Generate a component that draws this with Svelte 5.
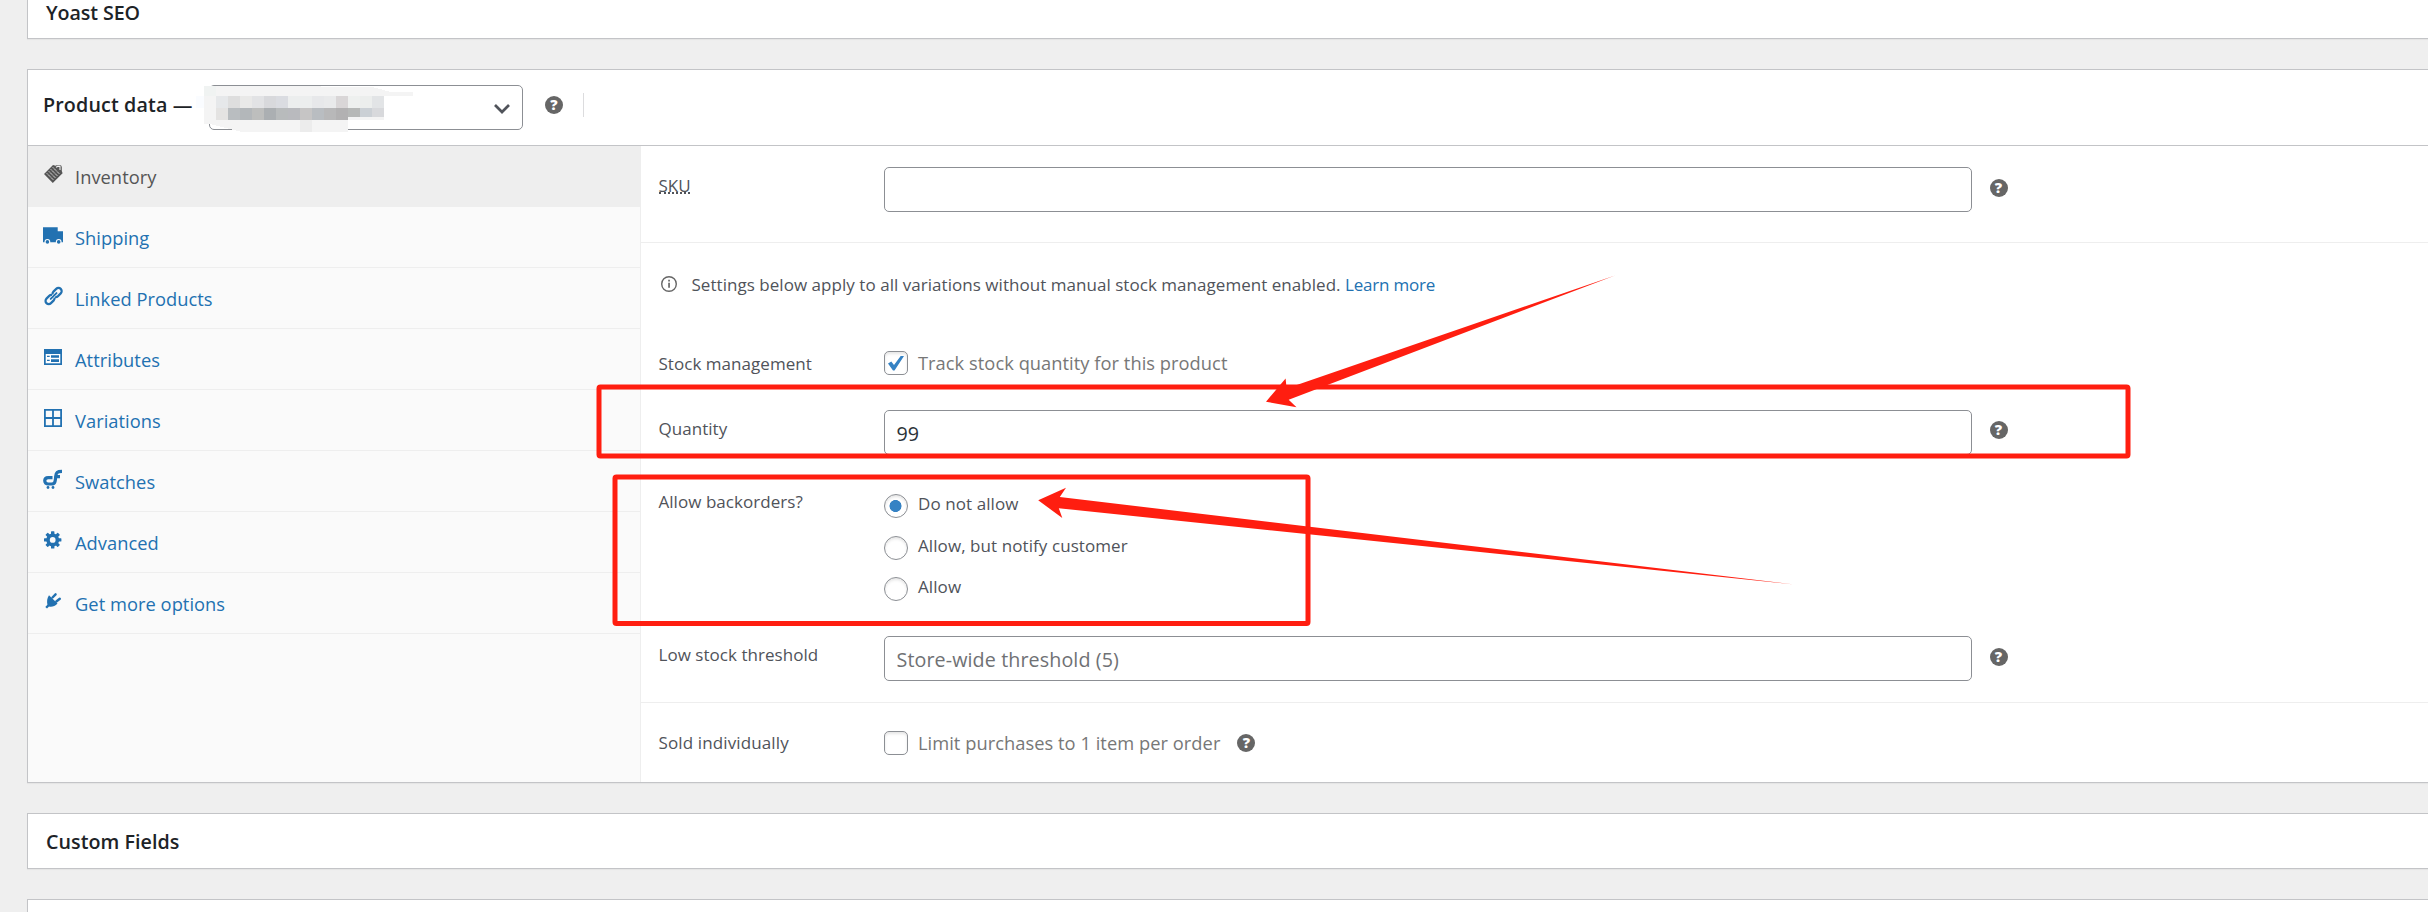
<script>
  const tabs = [
    { id: 'inventory', label: 'Inventory' },
    { id: 'shipping', label: 'Shipping' },
    { id: 'linked', label: 'Linked Products' },
    { id: 'attributes', label: 'Attributes' },
    { id: 'variations', label: 'Variations' },
    { id: 'swatches', label: 'Swatches' },
    { id: 'advanced', label: 'Advanced' },
    { id: 'more', label: 'Get more options' }
  ];
  const backorders = ['Do not allow', 'Allow, but notify customer', 'Allow'];
  const topCells = ['#e6e8ea', '#dedede', '#e9e9e8', '#e2e3e5', '#d8d9dc', '#dadce1', '#eceeee', '#eceeee', '#e7e8ea', '#e9eaeb', '#d9d6d7', '#eef0ef', '#eceeed', '#e2e4e6'];
  const lowCells = ['#e4e3e2', '#b9bdc0', '#b3b7ba', '#bdbebd', '#abafb2', '#b8bbbc', '#b9babe', '#c6c5c5', '#b9bdc1', '#b8b8b9', '#b2b1b2', '#b6b8b7', '#cbd0d5', '#d8d9dc'];
  const teeth = [0, 45, 90, 135, 180, 225, 270, 315];
</script>

{#snippet help()}
  <span class="help">?</span>
{/snippet}

<div class="page">
  <section class="panel first"><h2>Yoast SEO</h2></section>

  <section class="panel product">
    <header>
      <h2>Product data —</h2>
      <div class="select">
        <svg class="mosaic" width="230" height="56" viewBox="190 80 230 56" shape-rendering="crispEdges">
          <path fill="#f4f4f4" d="M204 86H294L374 87.500L391 92H413V96H384V120H348V132H242L218 126L210 124H204Z" />
          <path fill="#f0f3f2" d="M204 86h12v10h-12z" />
          <path fill="#fafcff" d="M196 96h8v12h-8z" />
          {#each topCells as c, i}<rect x={216 + i * 12} y="96" width="12" height="12" fill={c} />{/each}
          {#each lowCells as c, i}<rect x={216 + i * 12} y="108" width="12" height={i > 10 ? (i === 11 ? 9 : 12) - (i > 11 ? 3 : 0) : 12} fill={c} />{/each}
          <rect x="300" y="120" width="12" height="12" fill="#ececec" />
        </svg>
        <svg class="chevron" width="18" height="12" viewBox="0 0 18 12"><path d="M2 2L9 9L16 2" fill="none" stroke="#50535a" stroke-width="2.700" /></svg>
      </div>
      {@render help()}
      <i class="bar"></i>
    </header>

    <div class="body">
      <nav>
        {#each tabs as t, i}
          <a class:active={i === 0}>
            <svg width="20" height="20" viewBox="0 0 20 20" fill="currentColor">
              {#if t.id === 'inventory'}
                <path d="M1 10L10 1L12.500 1.800L13.500 1.200H18L18.800 3V7L19.600 9.300L9.800 18.900Z" />
                <path d="M13 3.200L14.600 2.400H17V6" fill="none" stroke="#eee" stroke-width="1.100" />
                <path d="M3.800 9.300L10.500 16M5.800 7.300L12.500 14M7.800 5.300L14.500 12M9.800 3.300L16.500 10" stroke="#e4e4e4" stroke-width="1" stroke-dasharray="1.600 .5" />
              {:else if t.id === 'shipping'}
                <path d="M0 2.300H14.700V6.300H20V17.300H0Z" />
                <circle cx="4.400" cy="16.900" r="2.900" fill="#fafafa" /><circle cx="15.700" cy="16.900" r="2.900" fill="#fafafa" />
                <circle cx="4.400" cy="16.900" r="1.800" /><circle cx="15.700" cy="16.900" r="1.800" />
              {:else if t.id === 'linked'}
                <g transform="rotate(-45 10.600 10)" fill="none" stroke="currentColor" stroke-width="2.200">
                  <path d="M10.200 11.800A3.300 3.300 0 0 1 7.600 13.200H3.700A3.200 3.200 0 0 1 3.700 6.800H7.600A3.300 3.300 0 0 1 10.200 8.200" />
                  <path d="M11 8.200A3.300 3.300 0 0 1 13.600 6.800H17.500A3.200 3.200 0 0 1 17.500 13.200H13.600A3.300 3.300 0 0 1 11 11.800" />
                  <path d="M6.500 10H14.700" stroke-width="1.900" stroke-linecap="round" />
                </g>
              {:else if t.id === 'attributes'}
                <path d="M1 2H19V18H1Z" /><path fill="#fff" d="M2.700 7H17.300V16.300H2.700Z" />
                <path d="M8 8.200h8v2.600H8zM8 12.300h8v2.700H8zM4 8.800h2.700v1.200H4zM4 12.800h2.700v1.200H4z" />
              {:else if t.id === 'variations'}
                <path d="M1.900 1.900H18.100V18.100H1.900ZM10 2V18M2 10H18" fill="none" stroke="currentColor" stroke-width="1.800" />
              {:else if t.id === 'swatches'}
                <path d="M9.500 8.700H5.200C.6 8.700.6 15 5.200 15H8.500C12.500 15 12.300 11.500 12.700 7.500C13.100 3.500 14 2.400 19 2.400M12.500 7.700H17" fill="none" stroke="currentColor" stroke-width="3.200" />
                <circle cx="5" cy="18.500" r="1.400" /><circle cx="10" cy="18.500" r="1.400" />
              {:else if t.id === 'advanced'}
                <circle cx="9.700" cy="9.900" r="4.700" fill="none" stroke="currentColor" stroke-width="3.600" />
                {#each teeth as a}<rect x="8" y="1.200" width="3.400" height="4" rx=".6" transform="rotate({a} 9.700 9.900)" />{/each}
              {:else}
                <path d="M6 4.200L14.500 12.500C12 15.600 8.500 16 6 15.500L4 17.600L2.300 16L4.400 13.800C3.800 10.500 4 7 6 4.200Z" />
                <path d="M9.500 6.500L12.600 3.300M13.300 10.500L16.800 7.700" stroke="currentColor" stroke-width="2.400" stroke-linecap="round" />
              {/if}
            </svg>
            <span>{t.label}</span>
          </a>
        {/each}
      </nav>

      <div class="form">
        <div class="row sku line">
          <label><abbr>SKU</abbr></label>
          <div class="field"></div>
          {@render help()}
        </div>
        <div class="notice">
          <svg width="18" height="18" viewBox="0 0 18 18"><circle cx="9" cy="9" r="7.300" fill="none" stroke="#666" stroke-width="1.400" /><path d="M8.200 4.800h1.700v1.600H8.200zM8.200 7.800h1.700v5H8.200z" fill="#666" /></svg>
          <p>Settings below apply to all variations without manual stock management enabled. <a>Learn more</a></p>
        </div>
        <div class="row stock">
          <label>Stock management</label>
          <div class="check">
            <span class="box"><svg width="22" height="22" viewBox="0 0 22 22"><path d="M3 11.500L6.300 9.600L9 13L15.700 4H19L9.500 18.500H8Z" fill="#3582c4" /></svg></span>
            <span class="desc">Track stock quantity for this product</span>
          </div>
        </div>
        <div class="row qty">
          <label>Quantity</label>
          <div class="field">99</div>
          {@render help()}
        </div>
        <div class="row back">
          <label>Allow backorders?</label>
          <div class="radios">
            {#each backorders as b, i}
              <div class="radio"><span class="dot" class:on={i === 0}></span>{b}</div>
            {/each}
          </div>
        </div>
        <div class="row low line">
          <label>Low stock threshold</label>
          <div class="field hint">Store-wide threshold (5)</div>
          {@render help()}
        </div>
        <div class="row sold">
          <label>Sold individually</label>
          <div class="check">
            <span class="box"></span>
            <span class="desc">Limit purchases to 1 item per order</span>
            {@render help()}
          </div>
        </div>
      </div>
    </div>
  </section>

  <section class="panel custom"><h2>Custom Fields</h2></section>
  <section class="panel last"></section>

  <svg class="marks" width="2428" height="912" viewBox="0 0 2428 912">
    <g fill="none" stroke="#ff1e10" stroke-width="5">
      <rect x="599" y="387" width="1529" height="69" rx="1.500" />
      <rect x="615" y="477" width="693" height="146.500" rx="1.500" />
    </g>
    <g fill="#ff1e10">
      <path d="M1266 401.700L1285.600 378.500L1286.600 388.500L1615 275.400L1288.700 399.700L1296.500 407.200Z" />
      <path d="M1038.200 500.300L1066 487.700L1059.800 497L1794 584.500L1058.800 508.300L1062.300 518Z" />
    </g>
  </svg>
</div>

<style>
  :global(body) { margin: 0; background: #efefef; }
  .page { position: relative; width: 2428px; height: 912px; overflow: hidden; background: #efefef; font-family: "Open Sans", "Noto Sans", sans-serif; font-size: 17px; line-height: 24px; letter-spacing: .04px; color: #50535a; display: flex; flex-direction: column; gap: 30px; white-space: nowrap; }
  .panel { margin-left: 27px; box-sizing: border-box; flex: none; background: #fff; border: solid #c3c4c7; border-width: 1px 0 1px 1px; box-shadow: 0 1px 1px rgba(0, 0, 0, .04); }
  h2 { margin: 0; font-size: 19.700px; font-weight: 600; line-height: 24px; color: #1d2327; }
  .first { height: 39px; border-top: 0; padding: 1px 0 0 18px; }
  .first h2 { letter-spacing: -.1px; }
  .product { height: 714px; }
  .custom { height: 56px; padding: 16px 0 0 18px; }
  .last { height: 60px; }
  header { box-sizing: border-box; height: 76px; border-bottom: 1px solid #c3c4c7; display: flex; align-items: flex-start; }
  header h2 { width: 181px; padding-left: 15px; margin-top: 23px; box-sizing: border-box; letter-spacing: .13px; }
  .select { position: relative; width: 314px; height: 45px; box-sizing: border-box; margin-top: 15px; border: 1px solid #8c8f94; border-radius: 5px; display: flex; justify-content: flex-end; padding: 17px 11px 0 0; }
  .mosaic { position: absolute; left: -20px; top: -6px; }
  .help { flex: none; width: 18px; height: 18px; border-radius: 50%; background: #666; color: #fff; font-size: 14.500px; font-weight: 800; line-height: 18px; text-align: center; }
  header .help { margin: 26px 0 0 22px; }
  .bar { width: 1px; height: 24px; margin: 23px 0 0 20px; background: #dcdcde; }
  .body { display: flex; height: 636px; }
  nav { width: 612px; background: #fafafa; border-right: 1px solid #eee; flex: none; }
  nav a { display: flex; gap: 12px; height: 60px; border-bottom: 1px solid #eee; padding-left: 15px; font-size: 18.300px; color: #2271b1; }
  nav a svg { margin-top: 18px; }
  nav a span { margin-top: 19px; }
  nav a.active { background: #eee; color: #555; }
  .form { flex: 1; }
  .row { box-sizing: border-box; display: grid; grid-template-columns: 226px 1088px auto; justify-content: start; align-items: start; padding-left: 17px; }
  .row > label { padding-left: .5px; }
  .line { border-bottom: 1px solid #eee; }
  .row > .help { margin-left: 17.500px; }
  .field { box-sizing: border-box; height: 45px; border: 1px solid #8c8f94; border-radius: 5px; padding: 0 11.500px; font-size: 19.700px; line-height: 46px; color: #2c3338; }
  .hint { color: #6f7174; letter-spacing: .1px; }
  .sku { height: 97px; }
  .sku label { margin-top: 28px; }
  abbr { display: block; width: 31px; height: 18px; line-height: 24px; border-bottom: 2px dotted #50535a; }
  .sku .field { margin-top: 21px; }
  .sku .help { margin-top: 33px; }
  .notice { height: 92px; display: flex; gap: 14px; padding-left: 18.500px; }
  .notice svg { margin-top: 32px; }
  .notice p { margin: 30px 0 0; }
  .notice a { color: #2271b1; letter-spacing: -.2px; }
  .stock { height: 59px; padding-top: 16px; }
  .stock label { margin-top: 1px; }
  .check { display: flex; }
  .box { box-sizing: border-box; width: 24px; height: 24px; border: 1px solid #8c8f94; border-radius: 5px; box-shadow: inset 0 2px 3px rgba(0, 0, 0, .1); }
  .box svg { display: block; }
  .desc { margin-left: 10px; font-size: 18.300px; color: #777; }
  .qty { height: 76px; }
  .qty label { margin-top: 23px; }
  .qty .field { margin-top: 16px; }
  .qty .help { margin-top: 27px; }
  .back { height: 150px; }
  .back label { margin-top: 20px; }
  .radios { padding-top: 24px; display: grid; grid-auto-rows: 41.500px; align-items: start; }
  .radio { display: flex; gap: 10px; line-height: 20.500px; letter-spacing: .08px; }
  .dot { box-sizing: border-box; width: 24px; height: 24px; border: 1px solid #8c8f94; border-radius: 50%; box-shadow: inset 0 2px 3px rgba(0, 0, 0, .1); }
  .dot.on { background: radial-gradient(circle at 10.500px 11px, #3582c4 5.700px, transparent 6.300px); }
  .low { height: 83px; }
  .low label { margin-top: 23px; }
  .low .field { margin-top: 16px; }
  .low .help { margin-top: 28px; }
  .sold { height: 79px; padding-top: 28px; }
  .sold > label { letter-spacing: .12px; }
  .check .help { margin: 3px 0 0 17px; }
  .marks { position: absolute; left: 0; top: 0; }
</style>
